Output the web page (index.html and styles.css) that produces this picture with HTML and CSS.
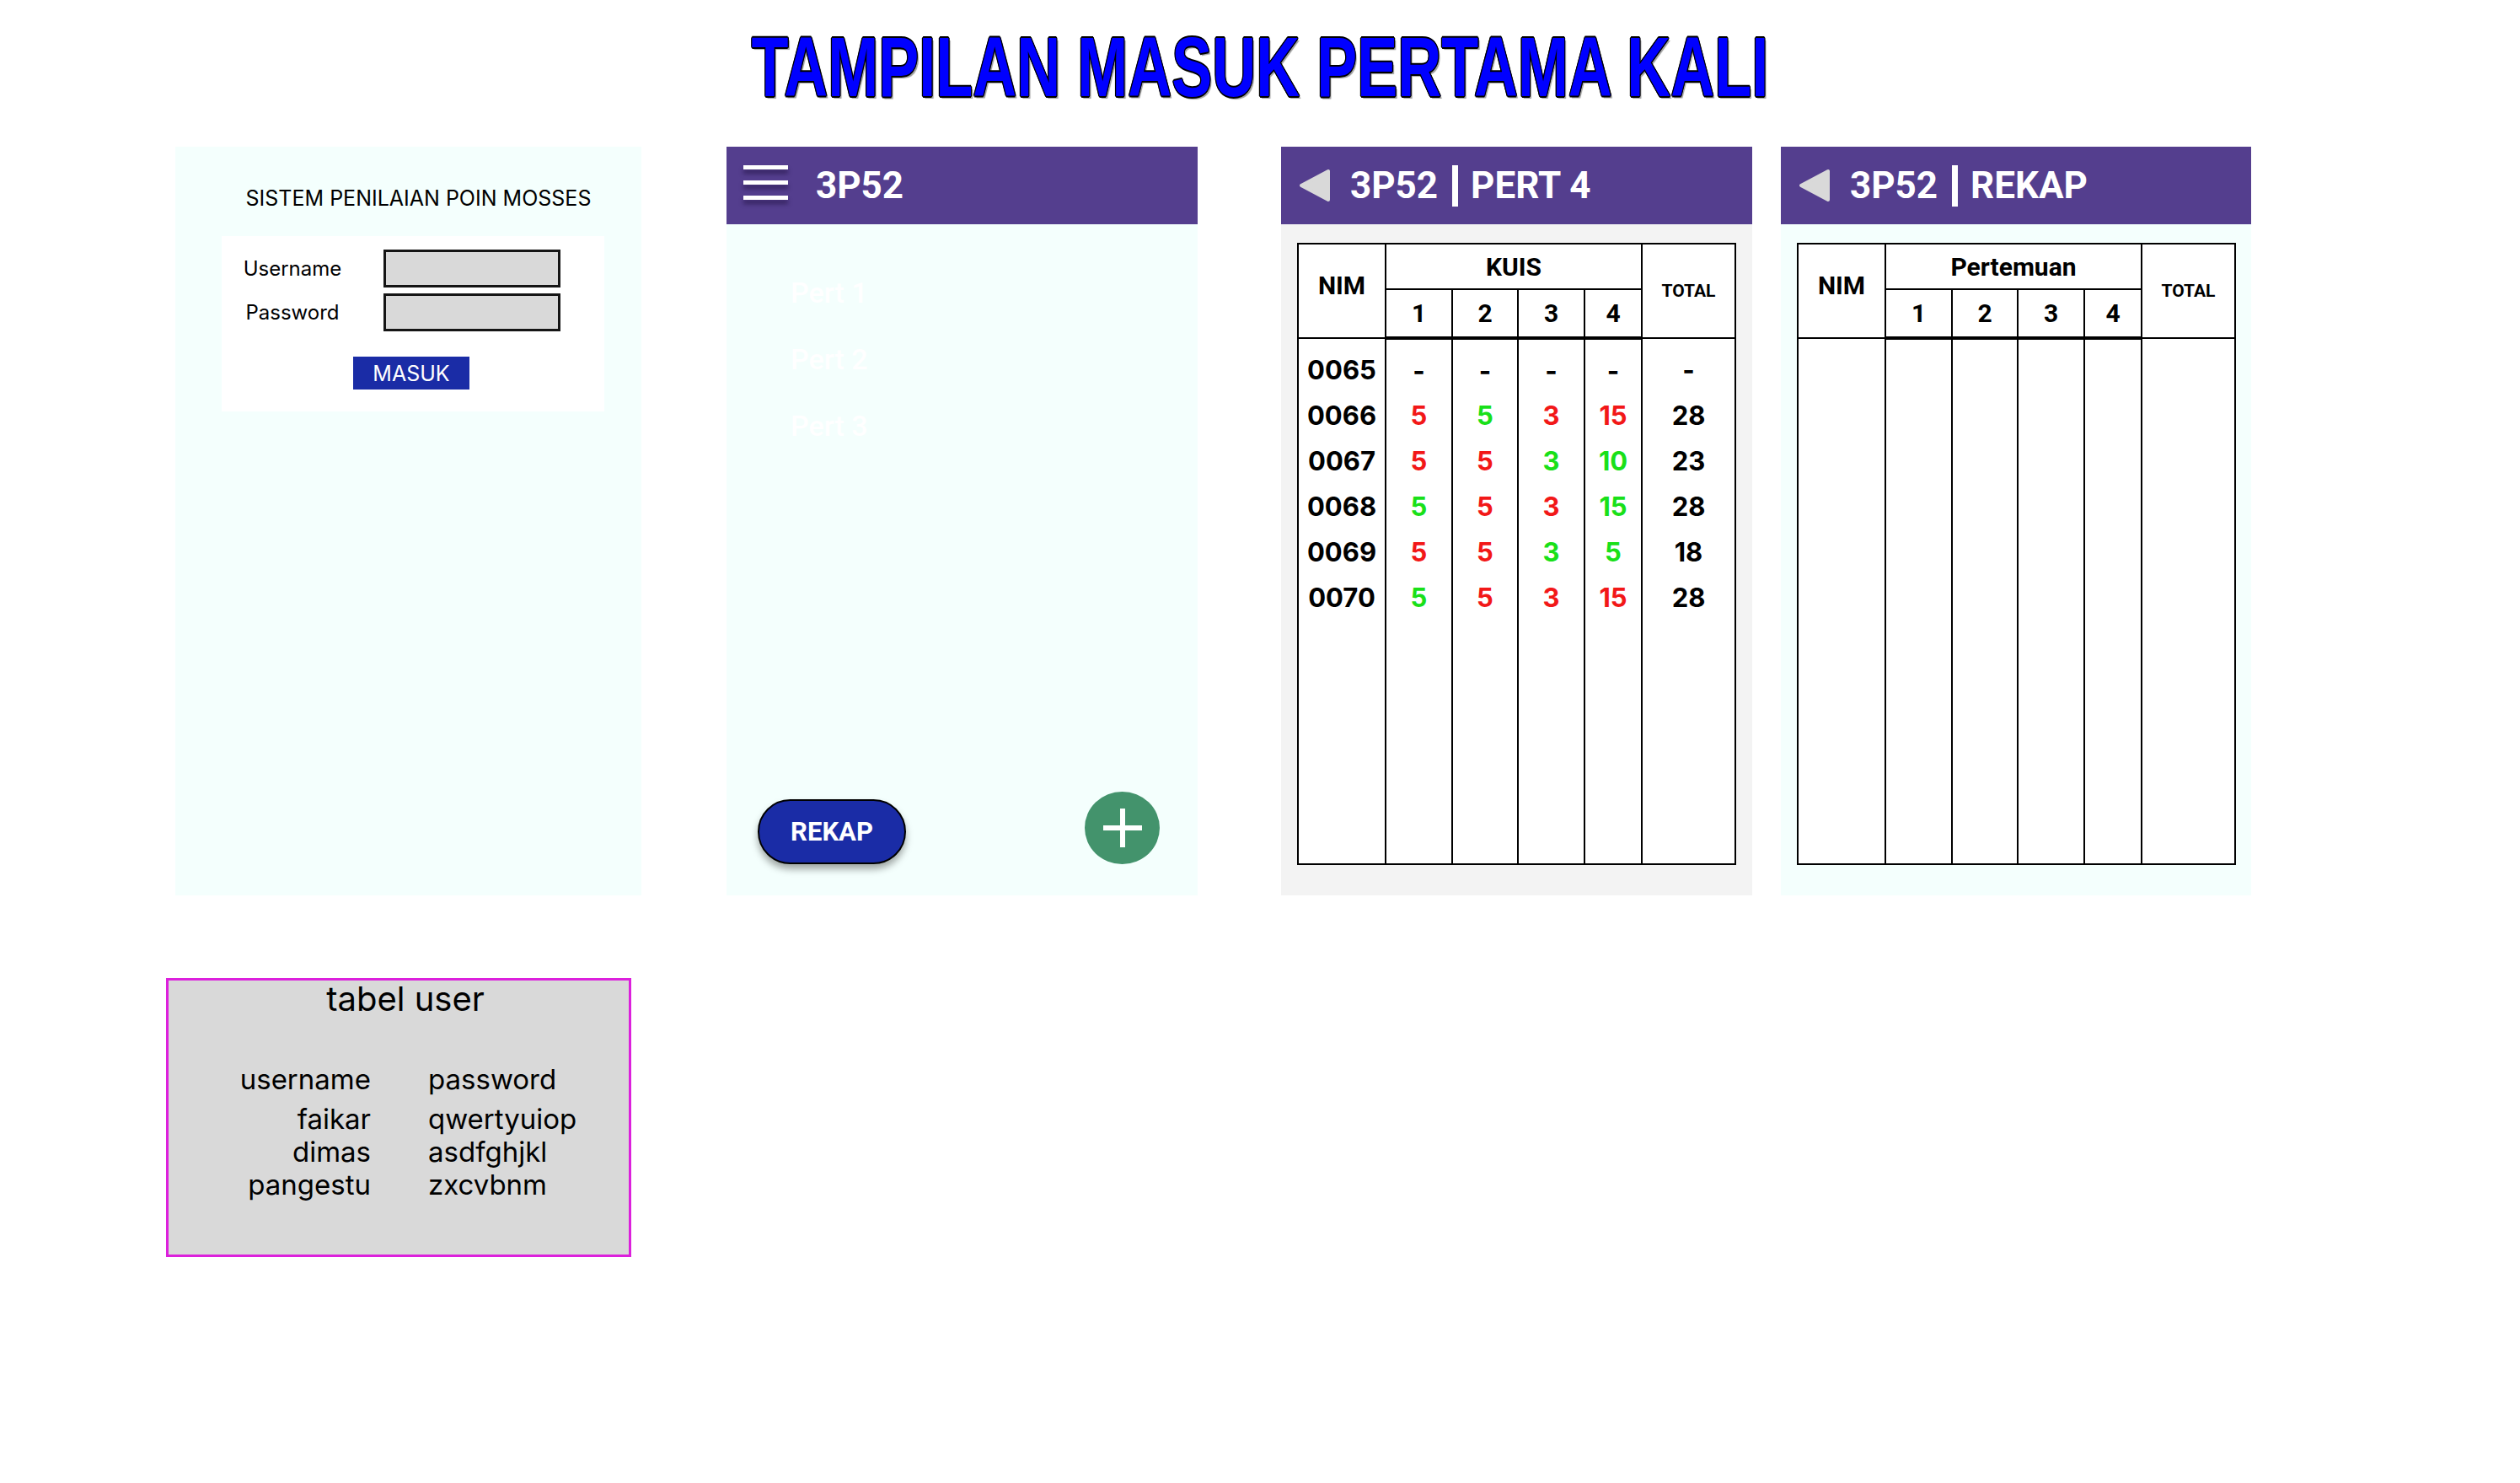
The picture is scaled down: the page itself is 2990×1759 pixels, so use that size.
FILE: index.html
```html
<!DOCTYPE html>
<html lang="id">
<head>
    <meta charset="UTF-8">
    <meta name="viewport" content="width=device-width, initial-scale=1.0">
    <title>Tampilan Masuk Pertama Kali</title>
    <link rel="stylesheet" href="styles.css">
</head>
<body>
    <h1 class="page-title"><span>TAMPILAN MASUK PERTAMA KALI</span></h1>

    <div class="screens">
        <!-- login -->
        <section class="screen login">
            <div class="login-title">SISTEM PENILAIAN POIN MOSSES</div>
            <form class="login-box" onsubmit="return false">
                <div class="field">
                    <label for="username">Username</label>
                    <input type="text" id="username">
                </div>
                <div class="field">
                    <label for="password">Password</label>
                    <input type="password" id="password">
                </div>
                <button class="masuk">MASUK</button>
            </form>
        </section>

        <!-- daftar pertemuan -->
        <section class="screen kelas">
            <div class="topbar">
                <div class="burger"><span></span><span></span><span></span></div>
                <span>3P52</span>
            </div>
            <ul class="pert-list">
                <li>Pert 1</li>
                <li>Pert 2</li>
                <li>Pert 3</li>
            </ul>
            <div class="kelas-foot">
                <button class="btn-rekap">REKAP</button>
                <button class="btn-add">
                    <svg width="50" height="50" viewBox="0 0 50 50">
                        <path d="M25 2V48M2 25H48" stroke="#fff" stroke-width="6"/>
                    </svg>
                </button>
            </div>
        </section>

        <!-- nilai per pertemuan -->
        <section class="screen nilai">
            <div class="topbar">
                <svg class="back" viewBox="0 0 38 40">
                    <path d="M35 3L35 37L3 20Z" fill="#d9d9d9" stroke="#d9d9d9" stroke-width="4" stroke-linejoin="round"/>
                </svg>
                <span>3P52</span><i class="sep"></i><span>PERT 4</span>
            </div>
            <table class="sheet">
                <colgroup>
                    <col style="width:104px"><col style="width:79px"><col style="width:78px">
                    <col style="width:79px"><col style="width:68px"><col style="width:111px">
                </colgroup>
                <thead>
                    <tr class="h1">
                        <th rowspan="2" class="nim-h">NIM</th>
                        <th colspan="4">KUIS</th>
                        <th rowspan="2" class="total-h">TOTAL</th>
                    </tr>
                    <tr class="h2">
                        <th>1</th><th>2</th><th>3</th><th>4</th>
                    </tr>
                </thead>
                <tbody id="nilai-body"></tbody>
            </table>
        </section>

        <!-- rekap -->
        <section class="screen rekap">
            <div class="topbar">
                <svg class="back" viewBox="0 0 38 40">
                    <path d="M35 3L35 37L3 20Z" fill="#d9d9d9" stroke="#d9d9d9" stroke-width="4" stroke-linejoin="round"/>
                </svg>
                <span>3P52</span><i class="sep"></i><span>REKAP</span>
            </div>
            <table class="sheet">
                <colgroup>
                    <col style="width:104px"><col style="width:79px"><col style="width:78px">
                    <col style="width:79px"><col style="width:68px"><col style="width:111px">
                </colgroup>
                <thead>
                    <tr class="h1">
                        <th rowspan="2" class="nim-h">NIM</th>
                        <th colspan="4">Pertemuan</th>
                        <th rowspan="2" class="total-h">TOTAL</th>
                    </tr>
                    <tr class="h2">
                        <th>1</th><th>2</th><th>3</th><th>4</th>
                    </tr>
                </thead>
                <tbody>
                    <tr class="filler empty">
                        <td></td><td></td><td></td><td></td><td></td><td></td>
                    </tr>
                </tbody>
            </table>
        </section>
    </div>

    <div class="user-table">
        <h2>tabel user</h2>
        <div class="user-grid">
            <span class="u head">username</span><span class="head">password</span>
            <span class="u">faikar</span><span>qwertyuiop</span>
            <span class="u">dimas</span><span>asdfghjkl</span>
            <span class="u">pangestu</span><span>zxcvbnm</span>
        </div>
    </div>

    <script>
        // r = merah, g = hijau
        const rows = [
            ["0065", ["-", ""], ["-", ""], ["-", ""], ["-", ""], "-"],
            ["0066", ["5", "r"], ["5", "g"], ["3", "r"], ["15", "r"], "28"],
            ["0067", ["5", "r"], ["5", "r"], ["3", "g"], ["10", "g"], "23"],
            ["0068", ["5", "g"], ["5", "r"], ["3", "r"], ["15", "g"], "28"],
            ["0069", ["5", "r"], ["5", "r"], ["3", "g"], ["5", "g"], "18"],
            ["0070", ["5", "g"], ["5", "r"], ["3", "r"], ["15", "r"], "28"]
        ];

        const body = document.getElementById("nilai-body");

        rows.forEach((row, i) => {
            const tr = document.createElement("tr");
            if (i === 0) tr.className = "first";

            const nim = document.createElement("td");
            nim.textContent = row[0];
            tr.appendChild(nim);

            for (let k = 1; k <= 4; k++) {
                const td = document.createElement("td");
                td.textContent = row[k][0];
                td.className = row[k][1];
                tr.appendChild(td);
            }

            const total = document.createElement("td");
            total.textContent = row[5];
            tr.appendChild(total);

            body.appendChild(tr);
        });

        // baris kosong sampai bawah tabel
        const filler = document.createElement("tr");
        filler.className = "filler";
        for (let k = 0; k < 6; k++) filler.appendChild(document.createElement("td"));
        body.appendChild(filler);
    </script>
</body>
</html>
```

FILE: styles.css
```css
body {
    margin: 0;
    background: #ffffff;
    font-family: Inter, "Liberation Sans", sans-serif;
    color: #000;
}

.page-title {
    margin: 0;
    padding-top: 29px;
    line-height: 100px;
    text-align: center;
    font-family: "Liberation Sans", Arial, sans-serif;
    font-size: 100px;
    font-weight: 700;
    color: #0000ff;
}

.page-title span {
    display: inline-block;
    transform: scaleX(0.72);
    text-shadow:
        1.6px 0 0 #000, -1.6px 0 0 #000, 0 1.6px 0 #000, 0 -1.6px 0 #000,
        1.1px 1.1px 0 #000, -1.1px -1.1px 0 #000, 1.1px -1.1px 0 #000, -1.1px 1.1px 0 #000,
        3px 3px 1px #a0a0a0;
}

.screens {
    display: flex;
    align-items: flex-start;
    margin-top: 45px;
    padding-left: 208px;
}

.screen {
    height: 888px;
    display: flex;
    flex-direction: column;
    background: #f4fffd;
}

.login { width: 553px; margin-right: 101px; }
.kelas { width: 559px; margin-right: 99px; }
.nilai { width: 559px; margin-right: 34px; background: #f3f3f3; }
.rekap { width: 558px; }

/* login */
.login-title {
    margin-top: 46px;
    padding-left: 24px;
    text-align: center;
    font-size: 25px;
    line-height: 30px;
}

.login-box {
    margin: 30px 0 0 55px;
    width: 454px;
    height: 208px;
    box-sizing: border-box;
    padding: 16px 0 0 24px;
    background: #ffffff;
}

.field {
    display: flex;
    align-items: center;
    gap: 48px;
}

.field + .field {
    margin-top: 7px;
}

.field label {
    width: 120px;
    text-align: center;
    font-size: 24px;
}

.field input {
    width: 210px;
    height: 45px;
    box-sizing: border-box;
    margin: 0;
    padding: 0;
    border: 3px solid #151515;
    background: #d9d9d9;
}

.masuk {
    display: block;
    margin: 30px 0 0 132px;
    width: 138px;
    height: 39px;
    padding: 0;
    border: none;
    background: #1a2ca6;
    color: #fff;
    font-family: Inter, sans-serif;
    font-size: 25px;
}

/* topbar */
.topbar {
    height: 92px;
    flex-shrink: 0;
    display: flex;
    align-items: center;
    background: #543e8e;
    color: #fff;
    font-family: Roboto, "Liberation Sans", sans-serif;
    font-weight: 700;
    font-size: 44px;
}

.kelas .topbar {
    padding-left: 20px;
    gap: 33px;
}

.burger {
    width: 53px;
    display: flex;
    flex-direction: column;
    gap: 13px;
    margin-bottom: 8px;
}

.burger span {
    height: 5px;
    background: #fff;
    box-shadow: 0 5px 5px rgba(30, 15, 60, 0.55);
}

.nilai .topbar,
.rekap .topbar {
    padding-left: 21px;
}

.back {
    width: 38px;
    height: 40px;
    margin-right: 23px;
}

.sep {
    width: 7px;
    height: 49px;
    background: #fff;
    margin: 0 15px 0 17px;
}

/* daftar pertemuan */
.pert-list {
    list-style: none;
    margin: 0;
    padding: 42px 0 0 76px;
    font-family: Roboto, sans-serif;
    font-weight: 500;
    font-size: 34px;
    line-height: 79px;
    color: #ffffff;
}

.kelas-foot {
    margin-top: auto;
    display: flex;
    justify-content: space-between;
    align-items: flex-end;
    padding: 0 45px 37px 37px;
}

.btn-rekap {
    width: 176px;
    height: 77px;
    box-sizing: border-box;
    border: 2px solid #000;
    border-radius: 39px;
    background: #1a2ca6;
    color: #fff;
    font-family: Roboto, sans-serif;
    font-weight: 700;
    font-size: 31px;
    box-shadow: 0 6px 8px rgba(0, 0, 0, 0.35);
}

.btn-add {
    width: 89px;
    height: 86px;
    padding: 0;
    border: none;
    border-radius: 50%;
    background: #43936c;
    display: flex;
    align-items: center;
    justify-content: center;
}

/* tabel nilai */
.sheet {
    margin: 22px 0 0 19px;
    width: 519px;
    table-layout: fixed;
    border-collapse: collapse;
    background: #fff;
}

.sheet th,
.sheet td {
    border: 2px solid #000;
    padding: 0;
    text-align: center;
    vertical-align: middle;
}

.sheet th {
    font-family: Roboto, sans-serif;
    font-weight: 700;
    font-size: 30px;
}

.sheet .nim-h {
    padding-bottom: 14px;
}

.sheet .total-h {
    font-size: 21px;
}

.sheet .h1 { height: 54px; }
.sheet .h2 { height: 58px; }

.sheet .h2 th {
    border-bottom: 4px solid #000;
}

.sheet td {
    border-top: none;
    border-bottom: none;
    font-family: Inter, sans-serif;
    font-weight: 700;
    font-size: 31px;
}

.sheet tbody tr { height: 54px; }

.sheet tr.first { height: 64px; }
.sheet tr.first td { padding-top: 10px; }

.sheet tr.filler { height: 290px; }
.sheet tr.filler td { border-bottom: 2px solid #000; }
.sheet tr.filler.empty { height: 624px; }

.sheet .r { color: #f21818; }
.sheet .g { color: #19e019; }

/* tabel user */
.user-table {
    margin: 98px 0 0 197px;
    width: 552px;
    height: 331px;
    box-sizing: border-box;
    border: 3px solid #dc20dc;
    background: #d9d9d9;
}

.user-table h2 {
    margin: 0;
    padding-left: 16px;
    text-align: center;
    font-weight: 400;
    font-size: 40px;
    line-height: 44px;
}

.user-grid {
    display: grid;
    grid-template-columns: 240px auto;
    column-gap: 68px;
    margin-top: 54px;
    font-size: 33px;
    line-height: 39px;
}

.user-grid .head {
    padding-bottom: 8px;
}

.user-grid .u {
    text-align: right;
}
```
